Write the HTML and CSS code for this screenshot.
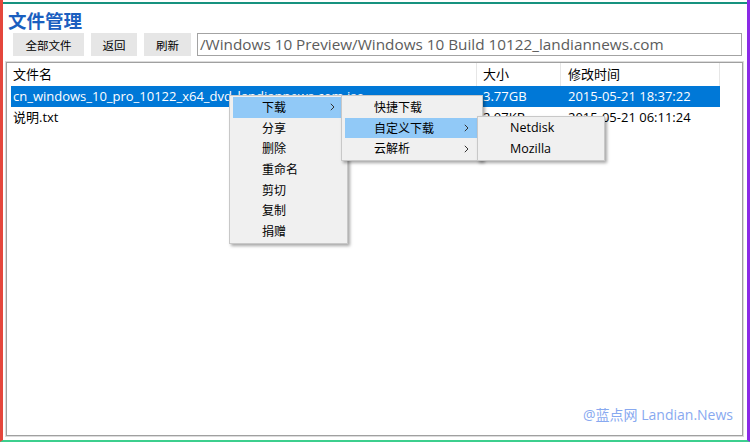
FILE: index.html
```html
<!DOCTYPE html>
<html lang="zh">
<head>
<meta charset="utf-8">
<title>文件管理</title>
<link rel="stylesheet" href="styles.css">
</head>
<body>
<div class="frame">
  <div class="topline"></div>
  <h1 class="title">文件管理</h1>
  <div class="toolbar">
    <button class="btn btn-all">全部文件</button>
    <button class="btn btn-back">返回</button>
    <button class="btn btn-refresh">刷新</button>
    <div class="path">/Windows 10 Preview/Windows 10 Build 10122_landiannews.com</div>
  </div>
  <div class="panel">
    <div class="list">
      <div class="row head">
        <div class="c name">文件名</div>
        <div class="c size">大小</div>
        <div class="c time">修改时间</div>
      </div>
      <div class="row sel">
        <div class="c name">cn_windows_10_pro_10122_x64_dvd_landiannews.com.iso</div>
        <div class="c size">3.77GB</div>
        <div class="c time">2015-05-21 18:37:22</div>
      </div>
      <div class="row">
        <div class="c name">说明.txt</div>
        <div class="c size">2.07KB</div>
        <div class="c time">2015-05-21 06:11:24</div>
      </div>
    </div>
    <div class="watermark">@蓝点网 Landian.News</div>
  </div>

  <div class="menu m1">
    <div class="item hl"><span>下载</span><svg class="arr" width="5" height="8" viewBox="0 0 5 8"><path d="M0.8 0.8 L4 4 L0.8 7.2" fill="none" stroke="#333" stroke-width="1"/></svg></div>
    <div class="item"><span>分享</span></div>
    <div class="item"><span>删除</span></div>
    <div class="item"><span>重命名</span></div>
    <div class="item"><span>剪切</span></div>
    <div class="item"><span>复制</span></div>
    <div class="item"><span>捐赠</span></div>
  </div>
  <div class="menu m2">
    <div class="item"><span>快捷下载</span></div>
    <div class="item hl"><span>自定义下载</span><svg class="arr" width="5" height="8" viewBox="0 0 5 8"><path d="M0.8 0.8 L4 4 L0.8 7.2" fill="none" stroke="#333" stroke-width="1"/></svg></div>
    <div class="item"><span>云解析</span><svg class="arr" width="5" height="8" viewBox="0 0 5 8"><path d="M0.8 0.8 L4 4 L0.8 7.2" fill="none" stroke="#333" stroke-width="1"/></svg></div>
  </div>
  <div class="menu m3">
    <div class="item"><span>Netdisk</span></div>
    <div class="item"><span>Mozilla</span></div>
  </div>
</div>
</body>
</html>
```
FILE: styles.css
```css
* { box-sizing: border-box; }
html, body { margin: 0; padding: 0; background: #fff; }
body {
  font-family: "Open Sans", "Noto Sans CJK SC", sans-serif;
  color: #000;
}
.frame {
  position: relative;
  width: 750px;
  height: 442px;
  border-left: 3px solid #e4463c;
  border-right: 3px solid #8b2ae6;
  border-bottom: 2px solid #3ccf8e;
  display: flex;
  flex-direction: column;
  overflow: hidden;
}
.topline {
  margin-top: 2px;
  height: 2px;
  background: #17927f;
  flex: none;
}
.title {
  margin: 4px 0 0 5px;
  font-family: "Noto Sans CJK SC", sans-serif;
  font-size: 18.5px;
  font-weight: 700;
  line-height: 24px;
  color: #1a5fc0;
  flex: none;
}
.toolbar {
  margin-top: 1px;
  height: 23px;
  display: flex;
  padding-left: 10px;
  flex: none;
}
.btn {
  border: none;
  background: #e6e6e6;
  font-family: "Noto Sans CJK SC", sans-serif;
  font-size: 11.5px;
  color: #000;
  padding: 0;
  height: 23px;
  margin-right: 7px;
}
.btn-all { width: 71px; }
.btn-back { width: 46px; }
.btn-refresh { width: 47px; margin-right: 6px; }
.path {
  width: 545px;
  height: 23px;
  border: 1px solid #a3a3a3;
  padding-left: 2px;
  font-size: 15.3px;
  line-height: 21px;
  color: #5c5c5c;
  white-space: nowrap;
  overflow: hidden;
}
.panel {
  margin: 6px 0 0 3px;
  width: 737px;
  height: 374px;
  border: 1px solid #a0a0a0;
  box-shadow: 0 0 0 1px #dcdcdc;
  display: flex;
  flex-direction: column;
  flex: none;
}
.list {
  padding-left: 4px;
  flex: 1;
}
.row {
  display: flex;
  height: 21px;
  font-size: 13px;
  line-height: 21px;
  width: 709px;
}
.row.head { height: 23px; line-height: 23px; }
.c { white-space: nowrap; overflow: hidden; }
.name { width: 466px; padding-left: 2px; }
.size { width: 84px; padding-left: 6px; }
.time { width: 159px; padding-left: 7px; }
.head .c { border-right: 1px solid #e6e6e6; }
.sel { background: #0078d7; color: #fff; }
.watermark {
  align-self: flex-end;
  margin: 0 9px 10px 0;
  font-size: 14px;
  line-height: 20px;
  color: #88a9f0;
}
.menu {
  position: absolute;
  background: #f0f0f0;
  border: 1px solid #c8c8c8;
  padding: 1px 3px;
  box-shadow: 2px 2px 3px rgba(0,0,0,0.35);
  font-family: "Noto Sans CJK SC", sans-serif;
  font-size: 12px;
}
.m1 { left: 226px; top: 95px; width: 119px; }
.m2 { left: 338px; top: 95px; width: 142px; }
.m3 { left: 474px; top: 116px; width: 128px; }
.item {
  height: 20.7px;
  line-height: 20.7px;
  padding-left: 29px;
  padding-right: 9px;
  display: flex;
  justify-content: space-between;
  align-items: center;
}
.m2 .item { padding-right: 10px; }
.m3 .item { font-family: "Open Sans", sans-serif; font-weight: 400; font-size: 12.5px; }
.item.hl { background: #91c9f7; }
.arr { flex: none; }
```
